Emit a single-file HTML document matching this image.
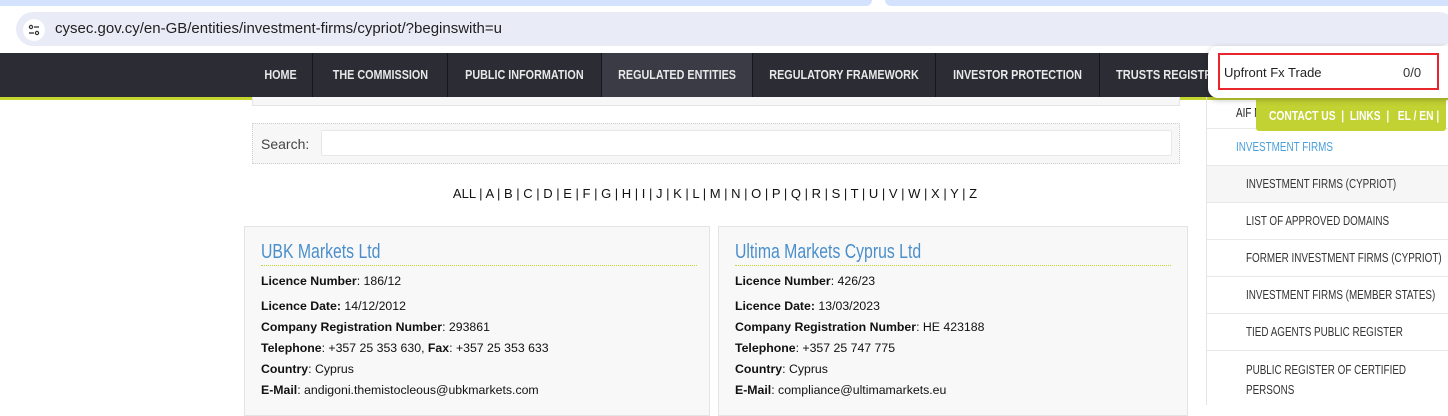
<!DOCTYPE html>
<html><head><meta charset="utf-8"><style>
*{margin:0;padding:0;box-sizing:border-box}
body{width:1448px;height:405px;overflow:hidden;background:#fff;font-family:"Liberation Sans",Arial,sans-serif;position:relative}
.a{position:absolute}
.sx{display:inline-block;transform:scaleX(.83);white-space:nowrap}
.sl{display:inline-block;transform:scaleX(.85);transform-origin:left center;white-space:nowrap}
.sm{display:inline-block;transform:scaleX(.79);transform-origin:left center;white-space:nowrap}
.nav{top:53px;left:0;width:1448px;height:44px;background:#2b2c34}
.nav div{position:absolute;top:0;height:44px;line-height:44px;color:#e8e8e8;font-size:13px;font-weight:bold;text-align:center;border-left:1px solid #15161a;white-space:nowrap;overflow:hidden}
.green{top:97px;left:0;width:1448px;height:3px;background:#c5d62f}
.side div.r{position:absolute;left:1207px;width:241px;border-bottom:1px solid #e8e8e8;font-size:12.5px;color:#333;white-space:nowrap}
.card{background:#f8f8f8;border:1px solid #e4e4e4;top:226px;height:190px}
.card h2{position:absolute;left:16px;top:14px;font-size:20px;font-weight:normal;color:#4a8fcb}
.card .ln{position:absolute;left:16px;top:38px;width:436px;border-top:1px dotted #c5d62f}
.card p{position:absolute;left:16px;font-size:12.3px;color:#111}
.card b{font-weight:bold}
</style></head><body>
<div class="a" style="top:0;left:0;width:872px;height:6px;background:#d3e3fd;border-radius:0 0 10px 0"></div>
<div class="a" style="top:0;left:885px;width:563px;height:6px;background:#d3e3fd;border-radius:0 0 0 10px"></div>
<div class="a" style="top:12px;left:16px;width:1440px;height:34px;background:#e9ecf6;border-radius:17px"></div>
<div class="a" style="top:19px;left:23px;width:22px;height:22px;background:#fff;border-radius:11px;text-align:center">
<svg width="12" height="12" viewBox="0 0 12 12" style="margin-top:5px"><circle cx="3" cy="3" r="1.6" fill="none" stroke="#333" stroke-width="1.2"/><line x1="6" y1="3" x2="11" y2="3" stroke="#333" stroke-width="1.3"/><line x1="1" y1="9" x2="6" y2="9" stroke="#333" stroke-width="1.3"/><circle cx="9" cy="9" r="1.6" fill="none" stroke="#333" stroke-width="1.2"/></svg></div>
<div class="a" style="top:20px;left:55px;font-size:15px;color:#1f1f1f">cysec.gov.cy/en-GB/entities/investment-firms/cypriot/?beginswith=u</div>

<div class="a nav">
<div style="left:248px;width:64px;border-left:none"><span class="sx">HOME</span></div>
<div style="left:312px;width:135px"><span class="sx">THE COMMISSION</span></div>
<div style="left:447px;width:154px"><span class="sx">PUBLIC INFORMATION</span></div>
<div style="left:601px;width:151px;background:#3a3b44"><span class="sx">REGULATED ENTITIES</span></div>
<div style="left:752px;width:183px"><span class="sx">REGULATORY FRAMEWORK</span></div>
<div style="left:935px;width:164px"><span class="sx">INVESTOR PROTECTION</span></div>
<div style="left:1099px;width:140px;text-align:left;padding-left:16px"><span class="sl">TRUSTS REGISTRY</span></div>
</div>
<div class="a green"></div>
<div class="a" style="top:97px;left:601px;width:151px;height:3px;background:#0e9bd0"></div>

<div class="a" style="top:97px;left:252px;width:928px;height:9px;background:#f7f7f7;border:1px solid #e6e6e6;border-top:none"></div>
<div class="a" style="top:123px;left:252px;width:928px;height:41px;background:#f7f7f7;border:1px dotted #ccc"></div>
<div class="a" style="top:136px;left:261px;font-size:14px;color:#444">Search:</div>
<div class="a" style="top:130px;left:321px;width:851px;height:26px;background:#fff;border:1px solid #e8e8e8;border-radius:2px"></div>
<div class="a" style="top:186px;left:0;width:1430px;text-align:center;font-size:13px;color:#111">ALL | A | B | C | D | E | F | G | H | I | J | K | L | M | N | O | P | Q | R | S | T | U | V | W | X | Y | Z</div>

<div class="a card" style="left:244px;width:466px">
<h2><span class="sm">UBK Markets Ltd</span></h2><div class="ln"></div>
<p style="top:47px"><b>Licence Number</b>: 186/12</p>
<p style="top:72px"><b>Licence Date:</b> 14/12/2012</p>
<p style="top:93px"><b>Company Registration Number</b>: 293861</p>
<p style="top:114px"><b>Telephone</b>: +357 25 353 630, <b>Fax</b>: +357 25 353 633</p>
<p style="top:135px"><b>Country</b>: Cyprus</p>
<p style="top:156px"><b>E-Mail</b>: andigoni.themistocleous@ubkmarkets.com</p>
</div>
<div class="a card" style="left:718px;width:470px">
<h2><span class="sm">Ultima Markets Cyprus Ltd</span></h2><div class="ln"></div>
<p style="top:47px"><b>Licence Number</b>: 426/23</p>
<p style="top:72px"><b>Licence Date:</b> 13/03/2023</p>
<p style="top:93px"><b>Company Registration Number</b>: HE 423188</p>
<p style="top:114px"><b>Telephone</b>: +357 25 747 775</p>
<p style="top:135px"><b>Country</b>: Cyprus</p>
<p style="top:156px"><b>E-Mail</b>: compliance@ultimamarkets.eu</p>
</div>

<div class="a" style="top:97px;left:1206px;width:1px;height:308px;background:#e5e5e5"></div>
<div class="side">
<div class="r" style="top:97px;height:32px;padding:9px 0 0 29px;color:#222"><span class="sm">AIF MANAGERS</span></div>
<div class="r" style="top:129px;height:37px;padding:11px 0 0 29px;color:#4a9fdc"><span class="sm">INVESTMENT FIRMS</span></div>
<div class="r" style="top:166px;height:37px;padding:11px 0 0 39px;background:#f6f6f6"><span class="sm">INVESTMENT FIRMS (CYPRIOT)</span></div>
<div class="r" style="top:203px;height:37px;padding:11px 0 0 39px"><span class="sm">LIST OF APPROVED DOMAINS</span></div>
<div class="r" style="top:240px;height:37px;padding:11px 0 0 39px"><span class="sm">FORMER INVESTMENT FIRMS (CYPRIOT)</span></div>
<div class="r" style="top:277px;height:37px;padding:11px 0 0 39px"><span class="sm">INVESTMENT FIRMS (MEMBER STATES)</span></div>
<div class="r" style="top:314px;height:37px;padding:11px 0 0 39px"><span class="sm">TIED AGENTS PUBLIC REGISTER</span></div>
<div class="r" style="top:351px;height:60px;padding:9px 0 0 39px;line-height:20px;border:none"><span class="sm">PUBLIC REGISTER OF CERTIFIED<br>PERSONS</span></div>
</div>
<div class="a" style="top:98px;left:1256px;width:190px;height:33px;background:#c2d232;border-radius:0 0 3px 3px;color:#fff;font-size:13px;font-weight:bold;line-height:35px;padding-left:13px"><span class="sm">CONTACT US &nbsp;| &nbsp;LINKS &nbsp;| &nbsp; EL / EN |</span></div>

<div class="a" style="top:46px;left:1208px;width:250px;height:52px;background:#fff;border-radius:10px;box-shadow:0 2px 6px rgba(0,0,0,.25)"></div>
<div class="a" style="top:53px;left:1218px;width:221px;height:37px;border:2px solid #e8262b"></div>
<div class="a" style="top:65px;left:1224px;font-size:13px;color:#222">Upfront Fx Trade</div>
<div class="a" style="top:65px;left:1403px;font-size:13px;color:#333">0/0</div>
</body></html>
